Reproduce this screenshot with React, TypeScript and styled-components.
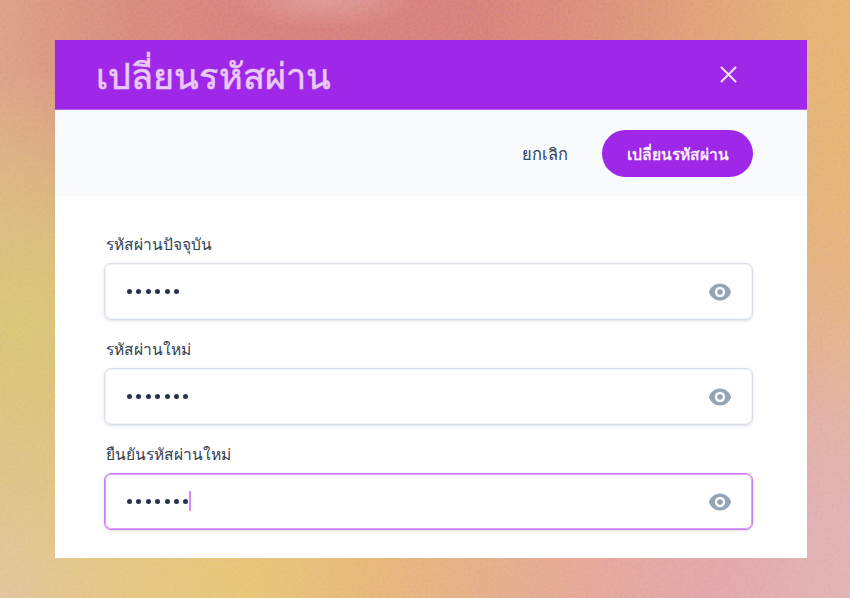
import React from "react";
import styled, { createGlobalStyle } from "styled-components";

const Global = createGlobalStyle`
  * { box-sizing: border-box; }
  body { margin: 0; overflow: hidden; font-family: "Noto Sans", "Liberation Sans", sans-serif; }
`;

const Backdrop = styled.main`
  position: relative;
  width: 850px;
  height: 598px;
  padding: 40px 43px 40px 55px;
  background: linear-gradient(90deg, #e0c196 0%, #e2c380 12%, #e5c370 29%, #e5b474 43%, #e3a984 58%, #e3a295 70%, #e1a1a5 83%, #dfafb0 100%);

  &::before {
    content: "";
    position: absolute;
    inset: 0;
    background:
      radial-gradient(ellipse 95px 28px at 325px 0, #dc9693 0%, #dc969300 100%),
      linear-gradient(90deg, #d99c82 0%, #d58577 16%, #d57c77 30%, #d47a75 54%, #d98b75 70%, #dfa072 85%, #e4b26c 100%);
    mask-image: linear-gradient(180deg, #000 0%, #000 12%, transparent 85%);
  }

  &::after {
    content: "";
    position: absolute;
    inset: 0;
    background:
      radial-gradient(ellipse 240px 260px at 20px 330px, #d6c470 0%, #d6c47000 100%),
      radial-gradient(ellipse 120px 280px at 850px 150px, #e4b06f 0%, #e4b06f00 100%);
  }
`;

const Grain = styled.svg`
  position: absolute;
  z-index: 1;
  inset: 0;
  width: 100%;
  height: 100%;
  opacity: 0.35;
  mix-blend-mode: soft-light;
`;

const Dialog = styled.section`
  position: relative;
  z-index: 2;
  display: flex;
  flex-direction: column;
  width: 752px;
  height: 518px;
  background: #fff;
`;

const Header = styled.header`
  display: flex;
  align-items: center;
  justify-content: space-between;
  height: 70px;
  padding: 0 70px 0 41px;
  background: #9f28e8;
  border-bottom: 1px solid #b765ee;
`;

const Title = styled.h1`
  margin: 2px 0 0;
  font-size: 36px;
  line-height: 50px;
  font-weight: 500;
  letter-spacing: 0.1px;
  color: #e9c9fa;
  -webkit-text-stroke: 0.6px #e9c9fa;
  white-space: nowrap;
`;

const IconButton = styled.button`
  display: flex;
  padding: 0;
  border: 0;
  background: none;
`;

const Actions = styled.div`
  display: flex;
  align-items: center;
  justify-content: flex-end;
  gap: 34px;
  height: 86px;
  padding: 1px 54px 0 0;
  background: #f8fafc;
`;

const TextButton = styled.button`
  padding: 0;
  border: 0;
  background: none;
  font: 400 15.6px/24px "Noto Sans", sans-serif;
  color: #334155;
  white-space: nowrap;
`;

const CancelButton = styled(TextButton)`
  font-size: 16.4px;
`;

const PrimaryButton = styled(TextButton)`
  width: 151px;
  height: 47px;
  border-radius: 24px;
  background: #9f28e8;
  font-weight: 600;
  color: #f8eefe;
`;

const Form = styled.form`
  display: flex;
  flex-direction: column;
  gap: 17px;
  padding: 36px 54px 0 49px;
`;

const Label = styled.label`
  display: block;
  height: 31px;
  padding-left: 2px;
  font-size: 15.6px;
  line-height: 25px;
  color: #334155;
`;

const InputBox = styled.div<{ $focused?: boolean }>`
  display: flex;
  align-items: center;
  height: 57px;
  padding: 0 20px 0 22px;
  border: 1px solid ${(p) => (p.$focused ? "#c77bf2" : "#d8dfe9")};
  border-radius: 7px;
  box-shadow:
    inset 0 0 0 1px ${(p) => (p.$focused ? "#d9a5f7" : "#f0f3f7")},
    0 1px 3px rgba(100, 116, 139, 0.22);
`;

const Dots = styled.div`
  display: flex;
  gap: 4.4px;
`;

const Dot = styled.i`
  width: 5px;
  height: 5px;
  border-radius: 50%;
  background: #26344a;
`;

const Caret = styled.span`
  width: 2px;
  height: 20px;
  margin: -2px 0 0 1px;
  background: #cf8cf5;
`;

const Toggle = styled(IconButton)`
  margin-left: auto;
`;

const fields = [
  { label: "รหัสผ่านปัจจุบัน", count: 6 },
  { label: "รหัสผ่านใหม่", count: 7 },
  { label: "ยืนยันรหัสผ่านใหม่", count: 7, focused: true },
];

const Eye = () => (
  <svg width="24" height="24" viewBox="0 0 24 24">
    <path
      fill="#94a3b8"
      d="M12 3.500C7 3.500 2.600 7 .8 12c1.800 5 6.200 8.500 11.200 8.500S21.400 17 23.200 12C21.400 7 17 3.500 12 3.500z"
    />
    <circle cx="12" cy="12" r="4" fill="#94a3b8" stroke="#fff" strokeWidth="2.400" />
  </svg>
);

export default function App() {
  return (
    <>
      <Global />
      <Backdrop>
        <Grain aria-hidden="true">
          <filter id="grain">
            <feTurbulence type="fractalNoise" baseFrequency="0.35" numOctaves="3" />
            <feComponentTransfer>
              <feFuncA type="linear" slope="0" intercept="1" />
            </feComponentTransfer>
          </filter>
          <rect width="100%" height="100%" filter="url(#grain)" />
        </Grain>
        <Dialog>
          <Header>
            <Title>เปลี่ยนรหัสผ่าน</Title>
            <IconButton aria-label="ปิด">
              <svg width="17" height="17" viewBox="0 0 17 17" stroke="#f3e2fd" strokeWidth="2" strokeLinecap="round">
                <path d="M1.500 1.500l14 14M15.500 1.500l-14 14" />
              </svg>
            </IconButton>
          </Header>
          <Actions>
            <CancelButton>ยกเลิก</CancelButton>
            <PrimaryButton>เปลี่ยนรหัสผ่าน</PrimaryButton>
          </Actions>
          <Form>
            {fields.map((f) => (
              <div key={f.label}>
                <Label>{f.label}</Label>
                <InputBox $focused={f.focused}>
                  <Dots>
                    {Array.from({ length: f.count }, (_, i) => (
                      <Dot key={i} />
                    ))}
                  </Dots>
                  {f.focused && <Caret />}
                  <Toggle type="button">
                    <Eye />
                  </Toggle>
                </InputBox>
              </div>
            ))}
          </Form>
        </Dialog>
      </Backdrop>
    </>
  );
}
